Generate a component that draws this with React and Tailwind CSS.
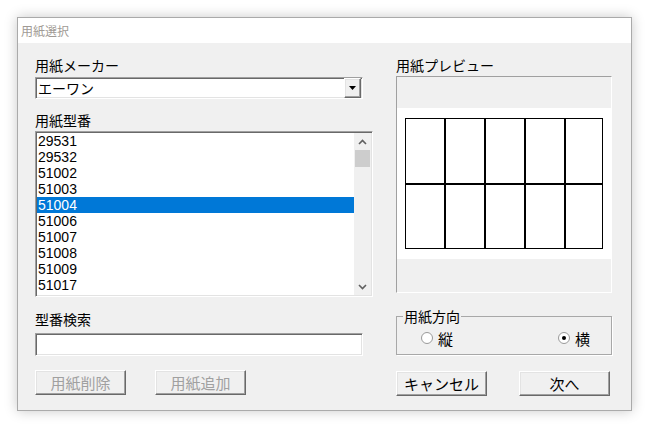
import React from 'react';

const items = ['29531', '29532', '51002', '51003', '51004', '51006', '51007', '51008', '51009', '51017', '51018'];

const sunken = 'border border-t-[#a0a0a0] border-l-[#a0a0a0] border-b-white border-r-white shadow-[inset_1px_1px_0_#696969,inset_-1px_-1px_0_#e3e3e3]';
const raised = 'border border-t-white border-l-white border-b-[#696969] border-r-[#696969] shadow-[inset_-1px_-1px_0_#a0a0a0,inset_1px_1px_0_#e3e3e3]';

const Label = ({ children }) => (
    <div className="h-[20px] leading-[20px] text-[14px] text-black">{children}</div>
);

const Button = ({ children, disabled }) => (
    <button
        className={`w-[91px] h-[25px] bg-[#f0f0f0] text-[15px] leading-none flex items-center justify-center ${raised} ${disabled ? 'text-[#a0a0a0]' : 'text-black'}`}
    >
        {children}
    </button>
);

const Radio = ({ checked, label }) => (
    <div className="flex items-center gap-[5px]">
        <div className="w-[12px] h-[12px] rounded-full border border-[#9a9a9a] bg-white flex items-center justify-center">
            {checked && <div className="w-[4px] h-[4px] rounded-full bg-black" />}
        </div>
        <span className="text-[15px] leading-none">{label}</span>
    </div>
);

export default function App() {
    return (
        <div className="w-[650px] h-[430px] bg-white pt-[17px] pl-[17px]" style={{ fontFamily: '"Noto Sans CJK JP", "Liberation Sans", sans-serif' }}>
            <div className="w-[615px] h-[394px] border border-[#aaaaaa] shadow-[0_0_12px_rgba(0,0,0,0.22)] flex flex-col">
                {/* Title bar */}
                <div className="h-[25px] bg-white pl-[3px] flex items-center text-[12px] text-[#a09a94]">用紙選択</div>

                {/* Body */}
                <div className="flex-1 bg-[#f0f0f0] pt-[12px] pl-[17px] flex gap-[23px]">
                    {/* Left column */}
                    <div className="w-[338px] flex flex-col">
                        <Label>用紙メーカー</Label>
                        <div className={`mt-[2px] w-[328px] h-[22px] bg-white flex items-center ${sunken}`}>
                            <span className="flex-1 pl-[2px] text-[14px] leading-none">エーワン</span>
                            <div className={`w-[17px] h-[20px] mr-[1px] bg-[#f0f0f0] flex items-center justify-center ${raised}`}>
                                <svg width="8" height="4" viewBox="0 0 8 4">
                                    <path d="M0 0h7l-3.5 4z" fill="#000" />
                                </svg>
                            </div>
                        </div>

                        <div className="mt-[11px]"><Label>用紙型番</Label></div>
                        <div className={`mt-[1px] h-[166px] bg-white flex p-[1px] ${sunken}`}>
                            <div className="flex-1 overflow-hidden">
                                {items.map((it) => (
                                    <div
                                        key={it}
                                        className={`h-[16px] leading-[16px] pl-[1px] text-[14px] ${it === '51004' ? 'bg-[#0078d7] text-white' : 'text-black'}`}
                                        style={{ fontFamily: '"Liberation Sans", Arial, sans-serif' }}
                                    >
                                        {it}
                                    </div>
                                ))}
                            </div>
                            <div className="w-[17px] bg-[#f0f0f0] flex flex-col items-center">
                                <div className="h-[17px] w-full flex items-center justify-center">
                                    <svg width="9" height="6" viewBox="0 0 9 6">
                                        <path d="M1 5l3.5-3.5L8 5" stroke="#606060" strokeWidth="1.6" fill="none" />
                                    </svg>
                                </div>
                                <div className="w-[15px] h-[17px] bg-[#cdcdcd]" />
                                <div className="flex-1" />
                                <div className="h-[17px] w-full flex items-center justify-center">
                                    <svg width="9" height="6" viewBox="0 0 9 6">
                                        <path d="M1 1l3.5 3.5L8 1" stroke="#606060" strokeWidth="1.6" fill="none" />
                                    </svg>
                                </div>
                            </div>
                        </div>

                        <div className="mt-[12px]"><Label>型番検索</Label></div>
                        <div className={`mt-[4px] w-[328px] h-[23px] bg-white ${sunken}`} />

                        <div className="mt-[14px] flex gap-[29px]">
                            <Button disabled>用紙削除</Button>
                            <Button disabled>用紙追加</Button>
                        </div>
                    </div>

                    {/* Right column */}
                    <div className="w-[216px] flex flex-col">
                        <Label>用紙プレビュー</Label>
                        <div className="mt-[1px] h-[217px] bg-[#f0f0f0] border border-t-[#a0a0a0] border-l-[#a0a0a0] border-b-white border-r-white pt-[31px]">
                            <div className="h-[151px] bg-white pt-[10px] pl-[8px]">
                                <svg width="198" height="131" viewBox="0 0 198 131">
                                    <rect x="0.5" y="0.5" width="197" height="130" fill="#fff" stroke="#000" strokeWidth="1" />
                                    <path d="M40 0v131M80 0v131M120 0v131M160 0v131M0 66h198" stroke="#000" strokeWidth="2" />
                                </svg>
                            </div>
                        </div>

                        <fieldset className="mt-[15px] border border-[#a8a8a8] shadow-[1px_1px_0_#fff] p-0 m-0 block">
                            <legend className="ml-[6px] px-[1px] text-[14px] leading-[16px]">用紙方向</legend>
                            <div className="mt-[7px] mb-[9px] h-[14px] pl-[24px] pr-[21px] flex items-center justify-between">
                                <Radio label="縦" />
                                <Radio checked label="横" />
                            </div>
                        </fieldset>

                        <div className="mt-[16px] flex gap-[32px]">
                            <Button>キャンセル</Button>
                            <Button>次へ</Button>
                        </div>
                    </div>
                </div>
            </div>
        </div>
    );
}
